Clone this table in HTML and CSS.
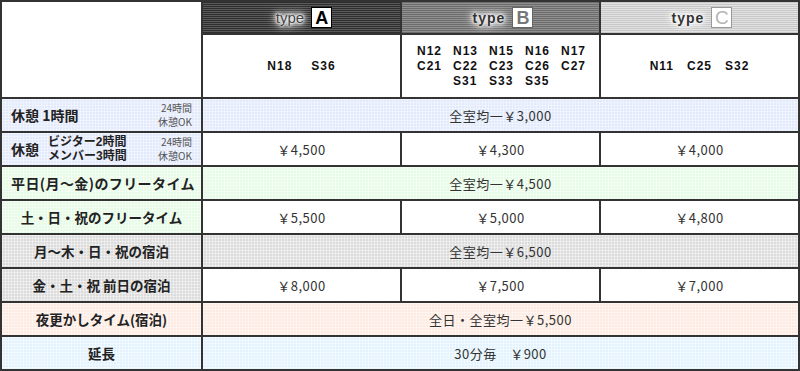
FILE: index.html
```html
<!DOCTYPE html>
<html lang="ja">
<head>
<meta charset="utf-8">
<title>料金表</title>
<link rel="stylesheet" href="styles.css">
</head>
<body>
<div class="price-table">
  <div class="cell corner"></div>
  <div class="cell head head-a"><span class="type">type</span><span class="badge">A</span></div>
  <div class="cell head head-b"><span class="type">type</span><span class="badge">B</span></div>
  <div class="cell head head-c"><span class="type">type</span><span class="badge">C</span></div>

  <div class="cell rooms"><span>N18</span><span class="gap"></span><span>S36</span></div>
  <div class="cell rooms">
    <div class="room-grid">
      <span>N12</span><span>N13</span><span>N15</span><span>N16</span><span>N17</span>
      <span>C21</span><span>C22</span><span>C23</span><span>C26</span><span>C27</span>
      <span></span><span>S31</span><span>S33</span><span>S35</span>
    </div>
  </div>
  <div class="cell rooms"><span>N11</span><span class="gap-s"></span><span>C25</span><span class="gap-s"></span><span>S32</span></div>

  <div class="cell label blue left">
    <span class="main big">休憩 1時間</span>
    <span class="note">24時間<br>休憩OK</span>
  </div>
  <div class="cell price blue span3">全室均一￥3,000</div>

  <div class="cell label blue left">
    <span class="main big">休憩</span>
    <span class="sub"><span class="line">ビジター2時間</span><span class="line">メンバー3時間</span></span>
    <span class="note">24時間<br>休憩OK</span>
  </div>
  <div class="cell price">￥4,500</div>
  <div class="cell price">￥4,300</div>
  <div class="cell price">￥4,000</div>

  <div class="cell label green left"><span class="main big spaced">平日(月～金)のフリータイム</span></div>
  <div class="cell price green span3">全室均一￥4,500</div>

  <div class="cell label green"><span class="main">土・日・祝のフリータイム</span></div>
  <div class="cell price">￥5,500</div>
  <div class="cell price">￥5,000</div>
  <div class="cell price">￥4,800</div>

  <div class="cell label gray"><span class="main">月～木・日・祝の宿泊</span></div>
  <div class="cell price gray span3">全室均一￥6,500</div>

  <div class="cell label gray"><span class="main">金・土・祝 前日の宿泊</span></div>
  <div class="cell price">￥8,000</div>
  <div class="cell price">￥7,500</div>
  <div class="cell price">￥7,000</div>

  <div class="cell label peach"><span class="main">夜更かしタイム(宿泊)</span></div>
  <div class="cell price peach span3">全日・全室均一￥5,500</div>

  <div class="cell label cyan"><span class="main">延長</span></div>
  <div class="cell price cyan span3">30分毎　￥900</div>
</div>
</body>
</html>
```
FILE: styles.css
```css
html, body {
  margin: 0;
  padding: 0;
  background: #fff;
}

.price-table {
  display: grid;
  grid-template-columns: 199px 197px 197px 197px;
  grid-template-rows: 31px 62px repeat(8, 32px);
  gap: 2px;
  padding: 2px;
  background: #333;
  width: 796px;
  font-family: "Noto Sans CJK JP", "Noto Sans", sans-serif;
  color: #222;
}

.cell {
  background: #fff;
  display: flex;
  align-items: center;
  justify-content: center;
  overflow: hidden;
}

.corner {
  grid-row: span 2;
}

.span3 {
  grid-column: span 3;
}

/* header */
.head {
  gap: 7px;
  padding-left: 5px;
}
.head-a {
  background: repeating-linear-gradient(to bottom, #2e2e2e 0 1px, #5a5a5a 1px 2px);
}
.head-b {
  background: repeating-linear-gradient(to bottom, #6c6c6c 0 1px, #909090 1px 2px);
}
.head-c {
  background: repeating-linear-gradient(to bottom, #c8c8c8 0 1px, #e2e2e2 1px 2px);
}
.type {
  font-family: "Liberation Sans", Arial, sans-serif;
  font-size: 14px;
  font-weight: bold;
  letter-spacing: 1px;
  color: #333;
  text-shadow: 0 0 2px #fff, 0 0 4px #fff, 0 0 6px #fff, 0 0 9px #fff, 0 0 12px #fff;
}
.head-a .type {
  font-weight: normal;
  letter-spacing: 0;
  color: #444;
  font-size: 15px;
  text-shadow: 0 0 2px #fff, 0 0 3px #fff, 0 0 5px #fff, 0 0 7px #fff, 0 0 10px #fff, 0 0 14px #fff;
}
.badge {
  box-sizing: border-box;
  width: 21px;
  height: 21px;
  background: #fff;
  border: 1px solid #000;
  display: flex;
  align-items: center;
  justify-content: center;
  font-family: "Liberation Sans", Arial, sans-serif;
  font-size: 18px;
  font-weight: bold;
  line-height: 1;
  color: #000;
}
.head-b .badge {
  border-color: #666;
  color: #777;
}
.head-c .badge {
  border-color: #999;
  color: #b5b5b5;
  font-weight: normal;
  font-size: 19px;
}

/* room numbers */
.rooms {
  font-family: "Liberation Sans", Arial, sans-serif;
  font-size: 12px;
  font-weight: bold;
  letter-spacing: 1px;
  color: #111;
}
.rooms .gap {
  width: 19px;
}
.rooms .gap-s {
  width: 13px;
}
.room-grid {
  display: grid;
  grid-template-columns: repeat(5, 36px);
  line-height: 15px;
  padding-left: 13px;
}

/* labels */
.label {
  font-size: 13.5px;
  font-weight: bold;
  color: #222;
}
.label.left {
  justify-content: flex-start;
  padding: 0 9px 0 9px;
}
.label .main {
  white-space: nowrap;
}
.label .main.big {
  font-size: 14px;
}
.label .main.spaced {
  letter-spacing: 0.4px;
}
.label .sub {
  display: flex;
  flex-direction: column;
  font-family: "Liberation Sans", "Noto Sans CJK JP", sans-serif;
  font-size: 12px;
  line-height: 14px;
  margin-left: 9px;
  white-space: nowrap;
}
.label .sub .line {
  display: block;
  height: 14px;
}
.label .note {
  margin-left: auto;
  font-size: 10px;
  font-weight: normal;
  line-height: 14px;
  color: #555;
  text-align: right;
  white-space: nowrap;
}

/* prices */
.price {
  font-size: 13px;
  font-weight: normal;
  color: #333;
  letter-spacing: 0.5px;
}

/* tinted cells with fine grid */
.blue, .green, .gray, .peach, .cyan {
  background-image:
    linear-gradient(rgba(255, 255, 255, 0.4) 1px, transparent 1px),
    linear-gradient(90deg, rgba(255, 255, 255, 0.4) 1px, transparent 1px);
  background-size: 3px 3px;
}
.blue { background-color: #e2eafc; }
.green { background-color: #e6fbe6; }
.gray { background-color: #dcdcdc; }
.peach { background-color: #fdebe2; }
.cyan { background-color: #e2f3fd; }
```
